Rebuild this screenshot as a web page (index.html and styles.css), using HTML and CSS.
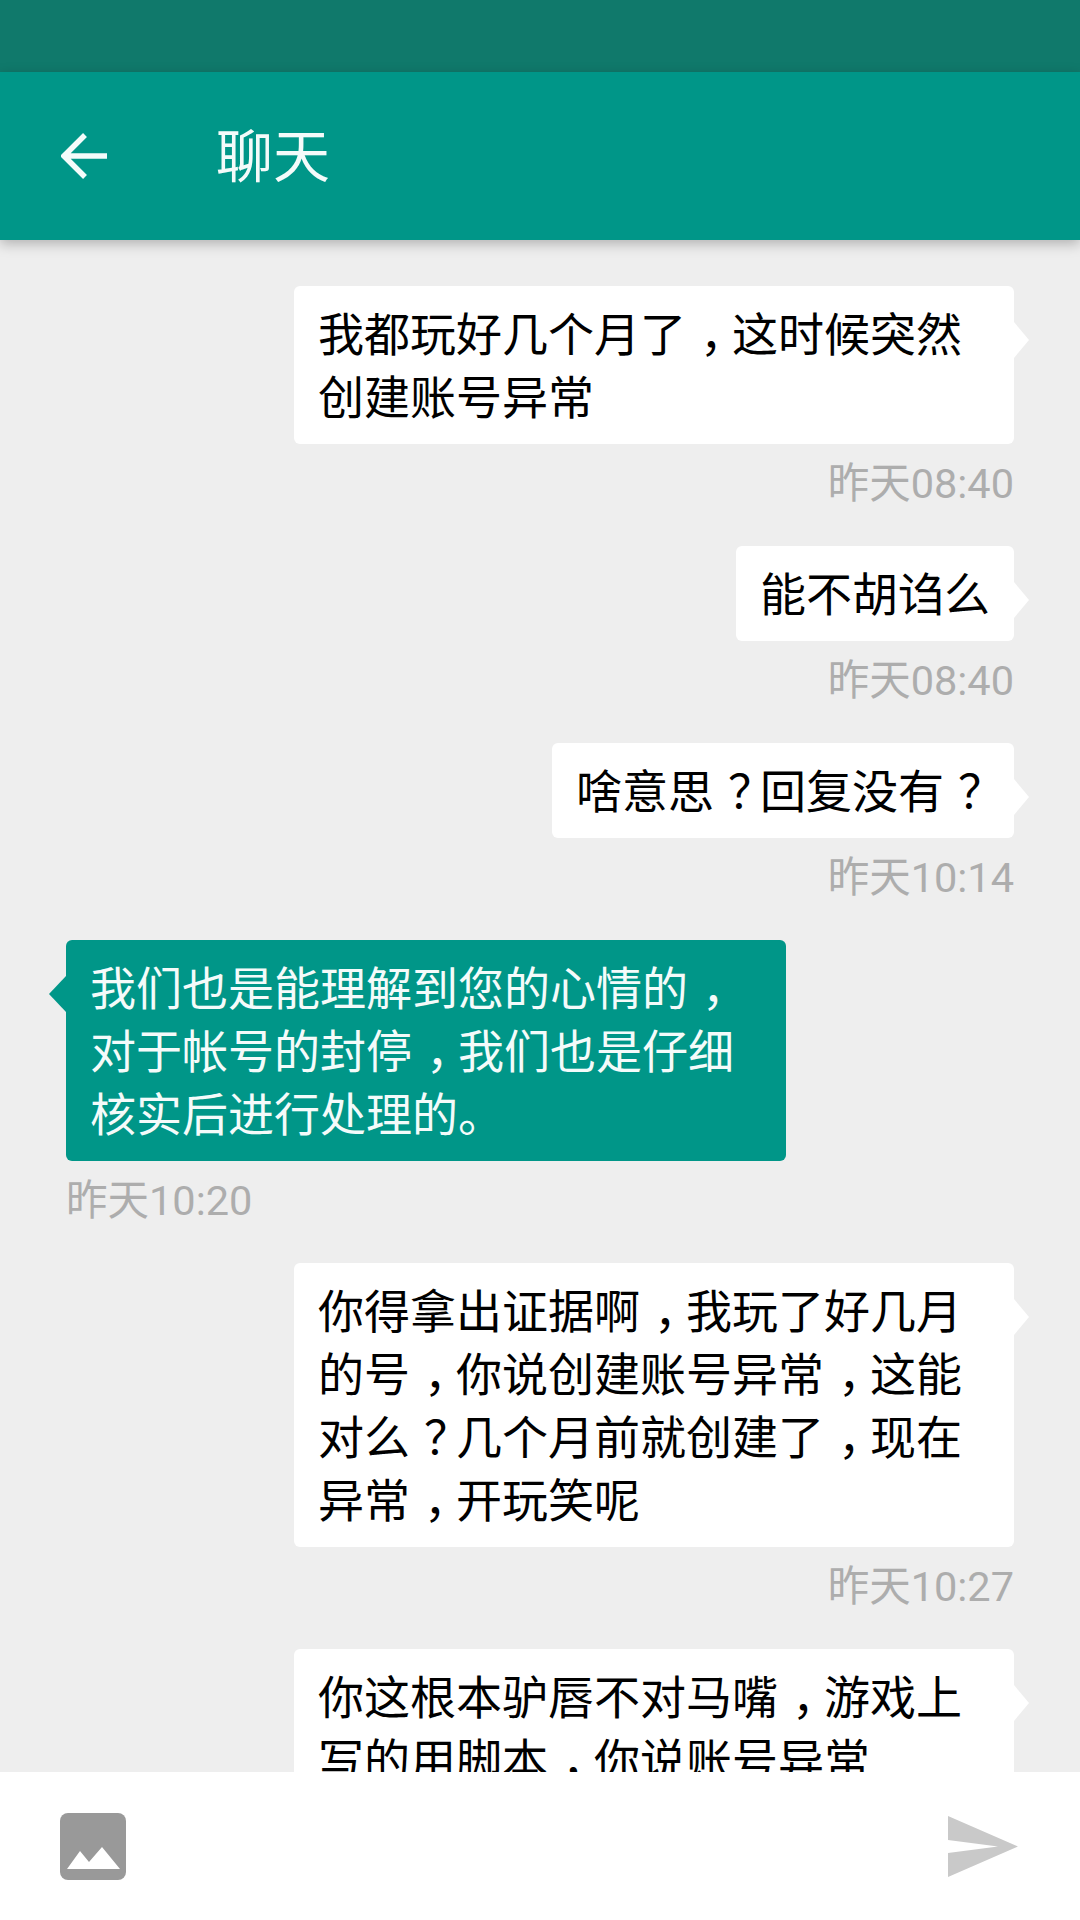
FILE: index.html
```html
<!DOCTYPE html>
<html lang="zh-CN">
<head>
    <meta charset="UTF-8">
    <title>聊天</title>
    <link rel="stylesheet" href="styles.css">
</head>
<body>
    <div class="status-bar"></div>

    <div class="chat-header">
        <svg class="back-icon" viewBox="0 0 48 48" width="48" height="48">
            <path d="M46 24H4M24 3L3 24l21 21" fill="none" stroke="#f4fbfa" stroke-width="5.5"/>
        </svg>
        <h1>聊天</h1>
    </div>

    <div class="chat-messages">
        <div class="message sent">
            <div class="bubble">我都玩好几个月了<span class="punct">，</span>这时候突然创建账号异常</div>
            <div class="time">昨天08:40</div>
        </div>
        <div class="message sent">
            <div class="bubble">能不胡诌么</div>
            <div class="time">昨天08:40</div>
        </div>
        <div class="message sent">
            <div class="bubble">啥意思<span class="punct">？</span>回复没有<span class="punct">？</span></div>
            <div class="time">昨天10:14</div>
        </div>
        <div class="message received">
            <div class="bubble">我们也是能理解到您的心情的<span class="punct">，</span>对于帐号的封停<span class="punct">，</span>我们也是仔细核实后进行处理的。</div>
            <div class="time">昨天10:20</div>
        </div>
        <div class="message sent">
            <div class="bubble">你得拿出证据啊<span class="punct">，</span>我玩了好几月的号<span class="punct">，</span>你说创建账号异常<span class="punct">，</span>这能对么<span class="punct">？</span>几个月前就创建了<span class="punct">，</span>现在异常<span class="punct">，</span>开玩笑呢</div>
            <div class="time">昨天10:27</div>
        </div>
        <div class="message sent">
            <div class="bubble">你这根本驴唇不对马嘴<span class="punct">，</span>游戏上写的用脚本<span class="punct">，</span>你说账号异常</div>
        </div>
    </div>

    <div class="chat-input">
        <svg class="image-icon" viewBox="0 0 66 67" width="66" height="67">
            <rect width="66" height="67" rx="8" fill="#999"/>
            <path d="M7 56L20 38l9 11 13-15 18 22z" fill="#fff"/>
        </svg>
        <svg class="send-icon" viewBox="0 0 70 61" width="70" height="61">
            <path d="M0 0l70 30.5L0 61V37l50-6.5L0 24z" fill="#c9c9c9"/>
        </svg>
    </div>
</body>
</html>
```

FILE: styles.css
```css
* {
    margin: 0;
    padding: 0;
    box-sizing: border-box;
}

body {
    width: 1080px;
    height: 1920px;
    display: flex;
    flex-direction: column;
    overflow: hidden;
    background: #eeeeee;
    font-family: Roboto, "Noto Sans CJK SC", sans-serif;
}

.status-bar {
    height: 72px;
    background: #10796b;
}

.chat-header {
    height: 168px;
    padding-left: 61px;
    display: flex;
    align-items: center;
    gap: 107px;
    background: #009688;
    box-shadow: 0 4px 12px rgba(0,0,0,0.25);
    position: relative;
}

.chat-header h1 {
    padding-top: 4px;
    font-size: 57px;
    line-height: 70px;
    font-weight: 400;
    color: #f4fbfa;
}

.chat-messages {
    flex: 1;
    min-height: 0;
    padding: 46px 66px 0;
    overflow: hidden;
    display: flex;
    flex-direction: column;
}

.message {
    width: 720px;
    margin-bottom: 32px;
    display: flex;
    flex-direction: column;
    flex-shrink: 0;
}

.message.sent {
    margin-left: auto;
    align-items: flex-end;
}

.bubble {
    padding: 18px 24px 14px;
    font-size: 46px;
    line-height: 63px;
    border-radius: 6px;
    position: relative;
}

.sent .bubble {
    background: #fff;
    color: #000;
}

.received .bubble {
    background: #009688;
    color: #f4fbfa;
}

.bubble::after {
    content: "";
    position: absolute;
    top: 36px;
    border-style: solid;
    border-color: transparent;
    border-width: 18px 0;
}

.sent .bubble::after {
    left: 100%;
    border-left: 15px solid #fff;
}

.received .bubble::after {
    right: 100%;
    border-right: 17px solid #009688;
}

/* the phone font centres full-width punctuation in its cell */
.punct {
    display: inline-block;
    width: 1em;
    text-indent: 14px;
}

.time {
    height: 63px;
    margin-top: 7px;
    padding-top: 1px;
    font-size: 41.5px;
    line-height: 63px;
    color: #adadad;
}

.chat-input {
    height: 148px;
    padding: 0 62px 0 60px;
    display: flex;
    align-items: center;
    justify-content: space-between;
    background: #fff;
    position: relative;
}
```
